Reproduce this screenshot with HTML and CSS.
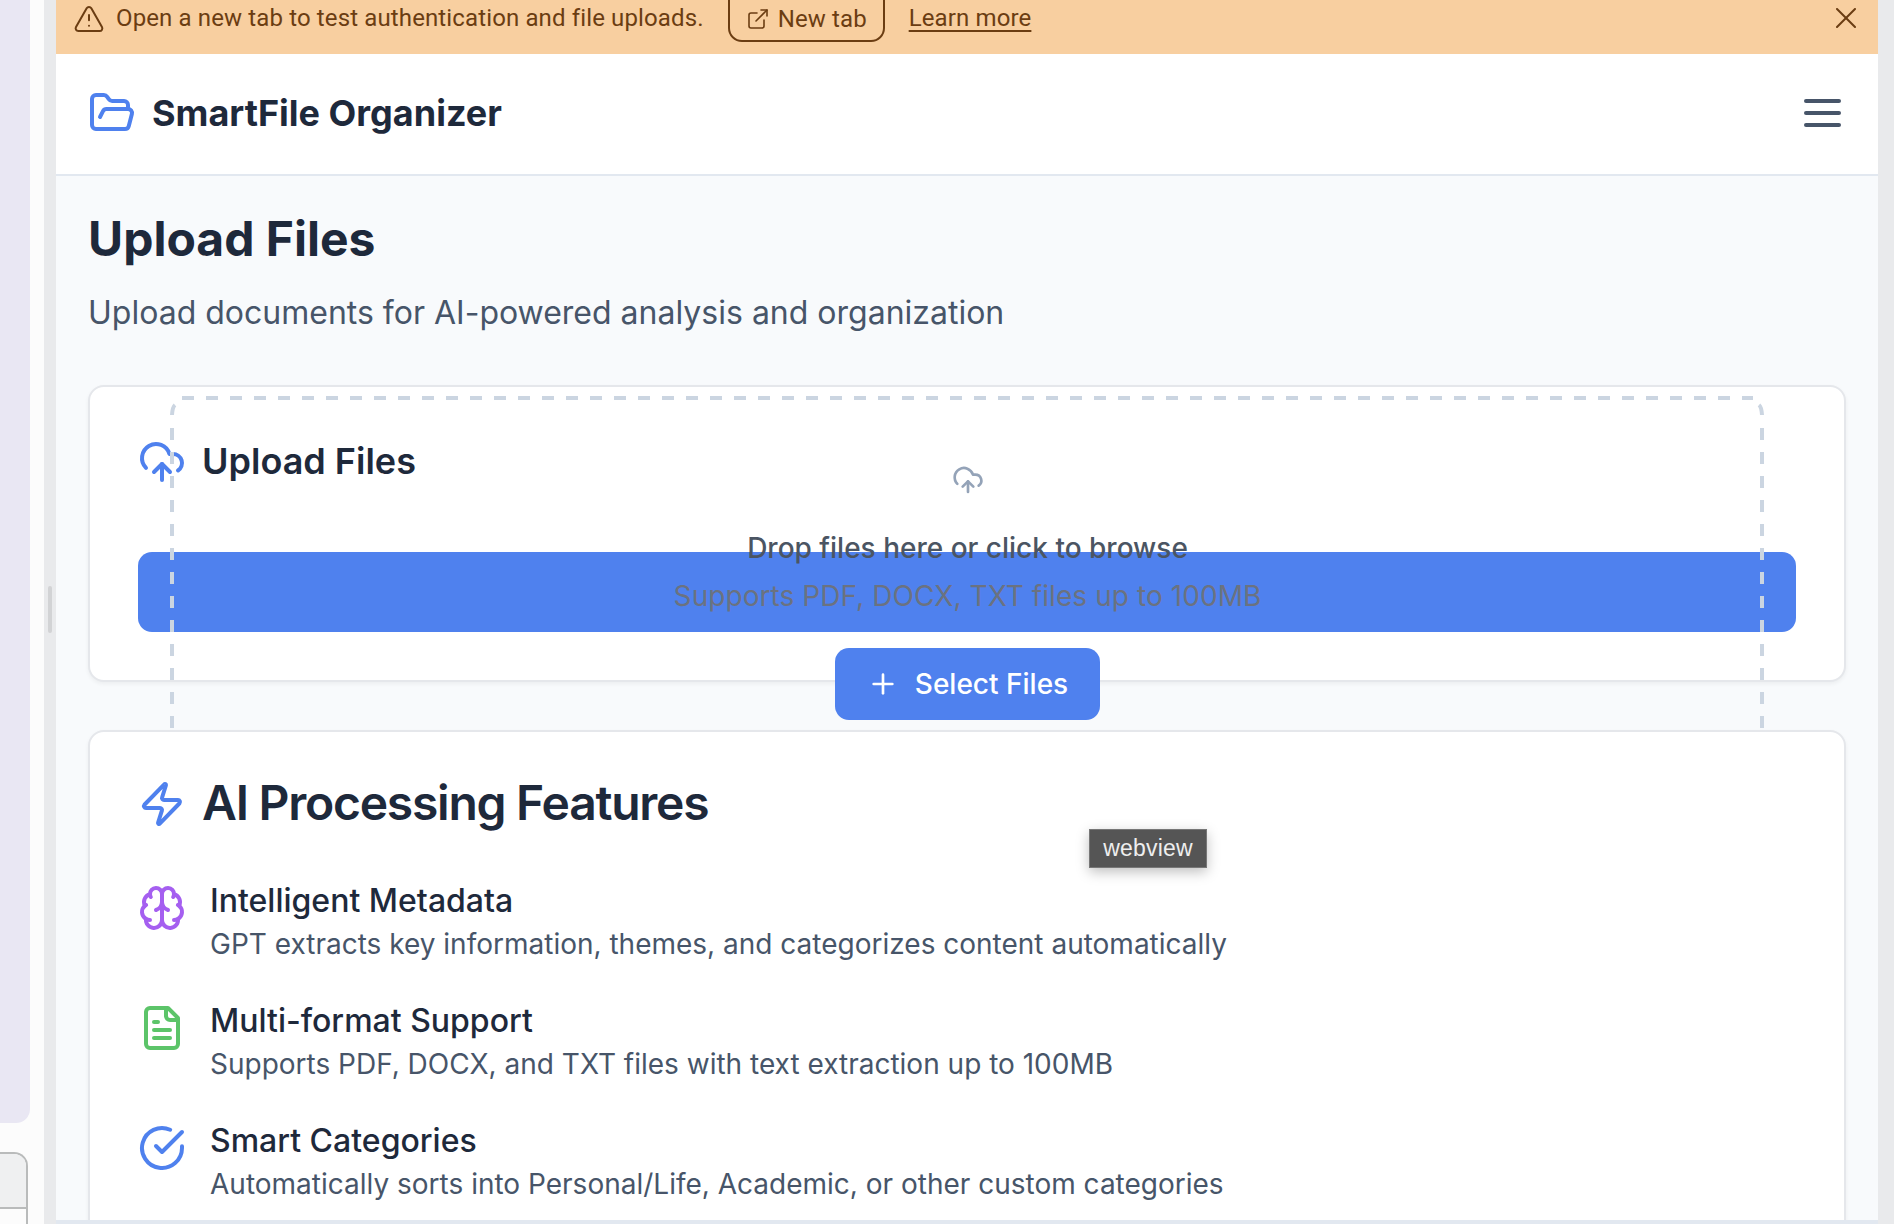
FILE: index.html
```html
<!DOCTYPE html>
<html lang="en">
<head>
    <meta charset="UTF-8">
    <meta name="viewport" content="width=device-width, initial-scale=1.0">
    <title>SmartFile Organizer</title>
    <link rel="stylesheet" href="styles.css">
</head>
<body>
    <div class="sidebar">
        <div class="side-panel"></div>
        <div class="side-box"><div class="side-box-top"></div></div>
    </div>
    <div class="gutter"><span class="grip"></span></div>

    <div class="app">
        <div class="banner">
            <svg class="banner-warn" viewBox="0 0 24 24"><path d="m21.73 18-8-14a2 2 0 0 0-3.48 0l-8 14A2 2 0 0 0 4 21h16a2 2 0 0 0 1.73-3"/><path d="M12 9v4"/><path d="M12 17h.01"/></svg>
            <span class="banner-text">Open a new tab to test authentication and file uploads.</span>
            <a class="banner-btn">
                <svg class="banner-ext" viewBox="0 0 24 24"><path d="M15 3h6v6"/><path d="M10 14 21 3"/><path d="M18 13v6a2 2 0 0 1-2 2H5a2 2 0 0 1-2-2V8a2 2 0 0 1 2-2h6"/></svg>
                New tab
            </a>
            <a class="banner-link">Learn more</a>
            <svg class="banner-close" viewBox="0 0 20 20"><path d="M1 1 19 19"/><path d="M19 1 1 19"/></svg>
        </div>

        <header class="topbar">
            <div class="brand">
                <svg class="icon icon-blue" viewBox="0 0 24 24"><path d="m6 14 1.5-2.9A2 2 0 0 1 9.24 10H20a2 2 0 0 1 1.94 2.5l-1.54 6a2 2 0 0 1-1.95 1.5H4a2 2 0 0 1-2-2V5a2 2 0 0 1 2-2h3.9a2 2 0 0 1 1.69.9l.81 1.2a2 2 0 0 0 1.67.9H18a2 2 0 0 1 2 2v2"/></svg>
                <span class="brand-name">SmartFile Organizer</span>
            </div>
            <div class="burger"><span></span><span></span><span></span></div>
        </header>

        <main class="main">
            <h1>Upload Files</h1>
            <p class="lead">Upload documents for AI-powered analysis and organization</p>

            <section class="card upload-card">
                <div class="card-head">
                    <svg class="icon icon-blue" viewBox="0 0 24 24"><path d="M12 13v8"/><path d="M4 14.899A7 7 0 1 1 15.71 8h1.79a4.5 4.5 0 0 1 2.5 8.242"/><path d="m8 17 4-4 4 4"/></svg>
                    <h2>Upload Files</h2>
                </div>
                <div class="upload-bar"></div>

                <div class="dropzone">
                    <svg class="dash" width="1594" height="340" fill="none">
                        <path class="dash-line" d="M12 2H1583"/>
                        <path d="M5 9Q2.5 11 2 19"/>
                        <path d="M1589 9Q1591.500 11 1592 19"/>
                        <path class="dash-line" d="M2 32V340"/>
                        <path class="dash-line" d="M1592 32V340"/>
                    </svg>
                    <svg class="drop-icon" viewBox="0 0 24 24"><path d="M12 13v8"/><path d="M4 14.899A7 7 0 1 1 15.71 8h1.79a4.5 4.5 0 0 1 2.5 8.242"/><path d="m8 17 4-4 4 4"/></svg>
                    <p class="drop-title">Drop files here or click to browse</p>
                    <p class="drop-sub">Supports PDF, DOCX, TXT files up to 100MB</p>
                    <button class="select-btn">
                        <svg viewBox="0 0 24 24"><path d="M5 12h14"/><path d="M12 5v14"/></svg>
                        Select Files
                    </button>
                </div>
            </section>

            <section class="card features-card">
                <div class="card-head features-head">
                    <svg class="icon icon-blue" viewBox="0 0 24 24"><path d="M4 14a1 1 0 0 1-.78-1.63l9.9-10.2a.5.5 0 0 1 .86.46l-1.92 6.02A1 1 0 0 0 13 10h7a1 1 0 0 1 .78 1.63l-9.9 10.2a.5.5 0 0 1-.86-.46l1.92-6.02A1 1 0 0 0 11 14z"/></svg>
                    <h2>AI Processing Features</h2>
                </div>
                <div class="feature">
                    <svg class="icon icon-purple" viewBox="0 0 24 24"><path d="M12 5a3 3 0 1 0-5.997.125 4 4 0 0 0-2.526 5.77 4 4 0 0 0 .556 6.588A4 4 0 1 0 12 18Z"/><path d="M12 5a3 3 0 1 1 5.997.125 4 4 0 0 1 2.526 5.77 4 4 0 0 1-.556 6.588A4 4 0 1 1 12 18Z"/><path d="M15 13a4.500 4.500 0 0 1-3-4 4.500 4.500 0 0 1-3 4"/><path d="M17.599 6.500a3 3 0 0 0 .399-1.375"/><path d="M6.003 5.125A3 3 0 0 0 6.401 6.500"/><path d="M3.477 10.896a4 4 0 0 1 .585-.396"/><path d="M19.938 10.500a4 4 0 0 1 .585.396"/><path d="M6 18a4 4 0 0 1-1.967-.516"/><path d="M19.967 17.484A4 4 0 0 1 18 18"/></svg>
                    <div>
                        <h3>Intelligent Metadata</h3>
                        <p>GPT extracts key information, themes, and categorizes content automatically</p>
                    </div>
                </div>
                <div class="feature">
                    <svg class="icon icon-green" viewBox="0 0 24 24"><path d="M15 2H6a2 2 0 0 0-2 2v16a2 2 0 0 0 2 2h12a2 2 0 0 0 2-2V7Z"/><path d="M14 2v4a2 2 0 0 0 2 2h4"/><path d="M10 9H8"/><path d="M16 13H8"/><path d="M16 17H8"/></svg>
                    <div>
                        <h3>Multi-format Support</h3>
                        <p>Supports PDF, DOCX, and TXT files with text extraction up to 100MB</p>
                    </div>
                </div>
                <div class="feature">
                    <svg class="icon icon-blue" viewBox="0 0 24 24"><path d="M22 11.080V12a10 10 0 1 1-5.930-9.140"/><path d="m9 11 3 3L22 4"/></svg>
                    <div>
                        <h3>Smart Categories</h3>
                        <p>Automatically sorts into Personal/Life, Academic, or other custom categories</p>
                    </div>
                </div>
            </section>

            <div class="tooltip">webview</div>
        </main>
        <div class="bottom-line"></div>
    </div>
    <div class="right-gutter"></div>
</body>
</html>
```

FILE: styles.css
```css
* {
    box-sizing: border-box;
}

html, body {
    height: 100%;
}

body {
    margin: 0;
    display: flex;
    overflow: hidden;
    background: #fcfcfc;
    font-family: Inter, "Liberation Sans", sans-serif;
    color: #1e293b;
}

svg {
    flex: none;
    fill: none;
    stroke: currentColor;
    stroke-width: 2;
    stroke-linecap: round;
    stroke-linejoin: round;
}

/* left strip */
.sidebar {
    width: 44px;
    flex: none;
    display: flex;
    flex-direction: column;
}

.side-panel {
    width: 30px;
    height: 1123px;
    background: #e9e7f3;
    border-bottom-right-radius: 14px;
}

.side-box {
    width: 28px;
    margin-top: 29px;
    flex: 1;
    background: #fcfcfc;
    border: 2px solid #b9bbbb;
    border-left: none;
    border-bottom: none;
    border-top-right-radius: 14px;
}

.side-box-top {
    height: 55px;
    background: #eff0f1;
    border-bottom: 2px solid #b9bbbb;
    border-top-right-radius: 12px;
}

.gutter {
    width: 12px;
    flex: none;
    display: flex;
    align-items: center;
    justify-content: center;
    background: #e9eaec;
}

.grip {
    width: 4px;
    height: 47px;
    margin-top: -5px;
    border-radius: 2px;
    background: #d2d3d5;
}

.right-gutter {
    width: 16px;
    flex: none;
    background: #e9eaec;
}

.app {
    flex: 1;
    min-width: 0;
    display: flex;
    flex-direction: column;
    background: #f8fafc;
}

/* banner */
.banner {
    height: 54px;
    flex: none;
    display: flex;
    align-items: center;
    padding-left: 17px;
    padding-bottom: 18px;
    background: #f8cfa0;
    color: #6b3d12;
    font-family: Roboto, sans-serif;
    font-size: 24px;
    letter-spacing: 0.13px;
    overflow: hidden;
    position: relative;
}

.banner-warn {
    width: 32px;
    height: 32px;
    stroke-width: 1.5;
    margin-top: 2px;
}

.banner-text {
    margin-left: 11px;
}

.banner-btn {
    display: flex;
    align-items: center;
    gap: 8px;
    width: 157px;
    height: 60px;
    margin-left: 24px;
    margin-top: -12px;
    padding: 14px 0 0 16px;
    border: 2px solid #6b3d12;
    border-radius: 14px;
}

.banner-ext {
    width: 24px;
    height: 24px;
    stroke-width: 1.6;
}

.banner-link {
    margin-left: 24px;
    text-decoration: underline;
    text-decoration-thickness: 2px;
    text-underline-offset: 4px;
}

.banner-close {
    width: 20px;
    height: 20px;
    margin-left: auto;
    margin-right: 22px;
    margin-top: 0;
}

/* top bar */
.topbar {
    height: 122px;
    flex: none;
    display: flex;
    align-items: center;
    justify-content: space-between;
    padding: 0 37px 2px 32px;
    background: #fff;
    border-bottom: 2px solid #e2e8f0;
}

.brand {
    display: flex;
    align-items: center;
    gap: 16px;
}

.brand-name {
    font-size: 36px;
    font-weight: 700;
}

.icon {
    width: 48px;
    height: 48px;
}

.icon-blue { color: #4f81ee; }
.icon-purple { color: #a55ff0; }
.icon-green { color: #5cc469; }

.burger {
    display: flex;
    flex-direction: column;
    gap: 8px;
}

.burger span {
    width: 37px;
    height: 4px;
    border-radius: 2px;
    background: #475569;
}

/* main column */
.main {
    flex: 1;
    min-height: 0;
    padding: 31px 32px 0;
    overflow: hidden;
    position: relative;
}

h1 {
    margin: 0;
    font-size: 48px;
    line-height: 64px;
    font-weight: 700;
}

.lead {
    margin: 18px 0 48px;
    font-size: 32px;
    line-height: 48px;
    color: #475569;
}

.card {
    background: #fff;
    border: 2px solid #e5e7eb;
    border-radius: 16px;
    box-shadow: 0 2px 4px rgba(0, 0, 0, 0.05);
    padding: 48px;
}

.upload-card {
    height: 297px;
    position: relative;
}

.card-head {
    display: flex;
    align-items: center;
    gap: 16px;
    height: 54px;
}

h2 {
    margin: -2px 0 0;
    font-size: 36px;
    font-weight: 600;
}

.upload-bar {
    height: 80px;
    margin-top: 63px;
    border-radius: 14px;
    background: #4f81ee;
}

/* dashed drop area, sits over the upload card */
.dropzone {
    position: absolute;
    left: 80px;
    top: 9px;
    width: 1594px;
    display: flex;
    flex-direction: column;
    align-items: center;
    padding-top: 68px;
    padding-left: 1px;
    text-align: center;
}

.dash {
    position: absolute;
    left: 0;
    top: 0;
    stroke: #cbd5e1;
    stroke-width: 4;
    stroke-linecap: butt;
}

.dash-line {
    stroke-dasharray: 12 12;
}

.drop-icon {
    width: 32px;
    height: 32px;
    color: #94a3b8;
}

.drop-title {
    margin: 32px 0 0;
    font-size: 28px;
    line-height: 40px;
    font-weight: 500;
    color: #4b5563;
}

.drop-sub {
    margin: 8px 0 0;
    font-size: 28px;
    line-height: 40px;
    letter-spacing: 0.07px;
    color: #6b7280;
}

.select-btn {
    display: flex;
    align-items: center;
    gap: 16px;
    height: 72px;
    margin-top: 32px;
    padding: 0 32px;
    border: none;
    border-radius: 14px;
    background: #4f81ee;
    color: #fff;
    font-family: inherit;
    font-size: 28px;
    font-weight: 500;
}

.select-btn svg {
    width: 32px;
    height: 32px;
}

/* features */
.features-card {
    position: relative;
    margin-top: 48px;
    z-index: 1;
}

.features-head {
    height: 48px;
    margin-bottom: 48px;
}

.features-head h2 {
    margin-top: -4px;
    font-size: 48px;
    letter-spacing: -1.25px;
}

.feature {
    display: flex;
    gap: 24px;
    margin-bottom: 32px;
}

.feature .icon {
    margin-top: 8px;
}

h3 {
    margin: 0;
    padding-top: 2px;
    font-size: 32px;
    line-height: 46px;
    font-weight: 500;
}

.feature p {
    margin: 0;
    font-size: 28px;
    line-height: 40px;
    color: #475569;
}

.tooltip {
    position: absolute;
    left: 1033px;
    top: 653px;
    z-index: 2;
    width: 118px;
    height: 39px;
    border: 1px solid #777;
    background: #555;
    color: #eee;
    font-family: "Liberation Sans", sans-serif;
    font-size: 23px;
    letter-spacing: 0.2px;
    line-height: 36px;
    text-align: center;
    box-shadow: 0 4px 12px rgba(0, 0, 0, 0.25);
}

.bottom-line {
    height: 4px;
    flex: none;
    background: #e2e8f0;
    position: relative;
    z-index: 2;
}
```
